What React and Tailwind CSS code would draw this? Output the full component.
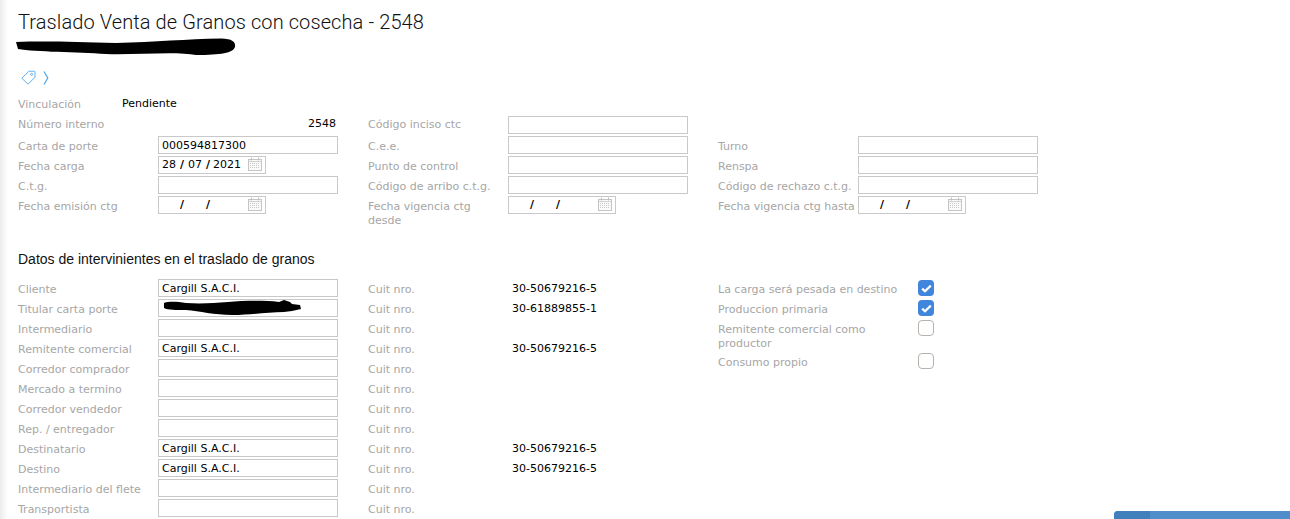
import React from 'react';

const labelClass = 'text-[11px] leading-[14px] text-[#a6a6a6]';

const TextBox = ({ value = '', children }) => (
  <div className="relative h-[18px] w-[180px] border border-[#c9c9c9] bg-white">
    <input readOnly value={value} className="block h-full w-full bg-transparent pl-[3px] text-[11px] leading-[14px] text-black outline-none" />
    {children}
  </div>
);

const CalendarIcon = () => (
  <svg width="14" height="14" viewBox="0 0 14 14" className="absolute right-[3px] top-[0px]" fill="none">
    <rect x="0.5" y="2.5" width="13" height="11" stroke="#c4c4c4" fill="#fafafa" />
    <path d="M0.5 4.5h13" stroke="#d0d0d0" />
    <path d="M3.5 0.5v3M10.5 0.5v3" stroke="#bdbdbd" />
    <path d="M2 6.5h10M2 8.5h10M2 10.5h10" stroke="#c9c9c9" strokeDasharray="1 1" />
  </svg>
);

const DateBox = ({ day = '', month = '', year = '' }) => (
  <div className="relative flex h-[18px] w-[108px] items-center border border-[#c9c9c9] bg-white pl-[3px] text-[11px] text-black">
    <span className="w-[14px]">{day}</span>
    <span className="ml-[4px] w-[8px] font-bold">/</span>
    <span className="w-[14px]">{month}</span>
    <span className="ml-[4px] w-[7px] font-bold">/</span>
    <span>{year}</span>
    <CalendarIcon />
  </div>
);

// label + control, one cell of the form grid
const Field = ({ label, children, labelPad = 'pt-[4px]' }) => (
  <div className="flex w-[320px] items-start">
    <div className={`${labelClass} w-[140px] shrink-0 ${labelPad}`}>{label}</div>
    {children}
  </div>
);

const Check = ({ checked }) =>
  checked ? (
    <span className="flex h-4 w-4 items-center justify-center rounded-[4px] bg-[#3f86dc]">
      <svg width="11" height="9" viewBox="0 0 11 9" fill="none">
        <path d="M1.2 4.6 4 7.2 9.8 1.6" stroke="#fff" strokeWidth="2.2" />
      </svg>
    </span>
  ) : (
    <span className="block h-4 w-4 rounded-[4px] border border-[#b8b2ac] bg-white" />
  );

const topRows = [
  { label: 'Carta de porte', value: '000594817300', c2: 'C.e.e.', c3: 'Turno' },
  { label: 'Fecha carga', date: true, c2: 'Punto de control', c3: 'Renspa' },
  { label: 'C.t.g.', value: '', c2: 'Código de arribo c.t.g.', c3: 'Código de rechazo c.t.g.' },
];

const people = [
  ['Cliente', 'Cargill S.A.C.I.', '30-50679216-5'],
  ['Titular carta porte', '', '30-61889855-1'],
  ['Intermediario', '', ''],
  ['Remitente comercial', 'Cargill S.A.C.I.', '30-50679216-5'],
  ['Corredor comprador', '', ''],
  ['Mercado a termino', '', ''],
  ['Corredor vendedor', '', ''],
  ['Rep. / entregador', '', ''],
  ['Destinatario', 'Cargill S.A.C.I.', '30-50679216-5'],
  ['Destino', 'Cargill S.A.C.I.', '30-50679216-5'],
  ['Intermediario del flete', '', ''],
  ['Transportista', '', ''],
];

const flags = [
  { label: 'La carga será pesada en destino', checked: true },
  { label: 'Produccion primaria', checked: true },
  { label: 'Remitente comercial como productor', checked: false, tall: true },
  { label: 'Consumo propio', checked: false },
];

export default function App() {
  return (
    <div className="relative flex h-[519px] w-full overflow-hidden bg-white font-['DejaVu_Sans','Liberation_Sans',sans-serif]">
      <div className="w-[8px] shrink-0 bg-gradient-to-r from-[#ececec] to-white" />
      <div className="min-w-0 flex-1 pl-[10px]">
        <h1 className="mt-[9px] font-['Roboto',sans-serif] text-[20px] font-light leading-[26px] tracking-[0.1px] text-[#111]">
          Traslado Venta de Granos con cosecha - 2548
        </h1>

        {/* tapado a mano en la captura */}
        <svg width="222" height="18" viewBox="0 0 222 18" className="-ml-[2px] mt-[3px] block">
          <path d="M0 4 C30 3 60 4 100 5 C140 4 170 1 205 0.5 C216 0.5 220 4 219 9 C217 15 205 17 180 17 C160 13 120 17 90 16 C60 14 20 14 2 11 Z" fill="#000" />
        </svg>

        <div className="mt-[14px] flex items-center gap-[7px] pl-[3px]">
          <svg width="15" height="15" viewBox="0 0 15 15" fill="none" stroke="#5fb0f2">
            <path d="M0.8 8.2 8 1.2h5.4l.6.6v5.4L7 14.2Z" strokeLinejoin="round" />
            <circle cx="10.6" cy="4.4" r="1" />
          </svg>
          <svg width="6" height="14" viewBox="0 0 6 14" fill="none" stroke="#4aa6f0" strokeWidth="1.2">
            <path d="M1 0.5 4.8 7 1 13.5" />
          </svg>
        </div>

        <div className="mt-[10px] flex h-5 items-start">
          <div className={`${labelClass} w-[104px] pt-[3px]`}>Vinculación</div>
          <div className="pt-[2px] text-[11px] leading-[14px] text-black">Pendiente</div>
        </div>

        <div className="flex h-[21px] items-start">
          <div className="flex w-[350px] items-start">
            <div className={`${labelClass} w-[140px] pt-[3px]`}>Número interno</div>
            <div className="w-[178px] pt-[2px] text-right text-[11px] leading-[14px] text-black">2548</div>
          </div>
          <Field label="Código inciso ctc" labelPad="pt-[3px]">
            <div className="mt-[1px]"><TextBox /></div>
          </Field>
        </div>

        {topRows.map((row) => (
          <div key={row.label} className="flex h-5 gap-[30px]">
            <Field label={row.label}>{row.date ? <DateBox day="28" month="07" year="2021" /> : <TextBox value={row.value} />}</Field>
            <Field label={row.c2}><TextBox /></Field>
            <Field label={row.c3}><TextBox /></Field>
          </div>
        ))}

        <div className="flex h-[30px] gap-[30px]">
          <Field label="Fecha emisión ctg"><DateBox /></Field>
          <Field label={<span className="block w-[110px]">Fecha vigencia ctg desde</span>}><DateBox /></Field>
          <Field label="Fecha vigencia ctg hasta"><DateBox /></Field>
        </div>

        <h2 className="mt-[24px] font-['Liberation_Sans',sans-serif] text-[14px] leading-[18px] text-[#111]">
          Datos de intervinientes en el traslado de granos
        </h2>

        <div className="mt-[11px] flex">
          <div className="w-[350px]">
            {people.map(([label, value]) => (
              <div key={label} className="relative h-5">
                <Field label={label}><TextBox value={value} /></Field>
                {label === 'Titular carta porte' && (
                  <svg width="140" height="17" viewBox="0 0 140 17" className="absolute left-[144px] top-[0px]">
                    <path d="M2 4 C8 2 16 3 24 4 C40 5 52 4 66 3 C80 2 100 1 117 3 L122 1 L128 3 L130 5 L138 6 L139 10 L130 12 L122 13 C105 13 90 16 70 16 C52 16 38 12 24 11 C14 11 6 11 2 9 Z" fill="#000" />
                  </svg>
                )}
              </div>
            ))}
          </div>

          <div className="w-[350px]">
            {people.map(([label, , cuit]) => (
              <div key={label} className="flex h-5 items-start">
                <div className={`${labelClass} w-[144px] pt-[4px]`}>Cuit nro.</div>
                <div className="pt-[3px] text-[11px] leading-[14px] text-black">{cuit}</div>
              </div>
            ))}
          </div>

          <div className="w-[216px]">
            {flags.map((flag) => (
              <div key={flag.label} className={flag.tall ? 'flex h-[33px] items-start' : 'flex h-5 items-start'}>
                <div className={`${labelClass} w-[200px] pt-[4px]`}>{flag.label}</div>
                <div className="pt-[1px]"><Check checked={flag.checked} /></div>
              </div>
            ))}
          </div>
        </div>
      </div>

      {/* barra flotante abajo a la derecha */}
      <div className="absolute bottom-0 right-0 flex h-[8px] w-[176px] overflow-hidden rounded-tl-[4px] bg-[#4f8ecb]">
        <div className="w-[36px] bg-[#3e7fbc]" />
      </div>
    </div>
  );
}
